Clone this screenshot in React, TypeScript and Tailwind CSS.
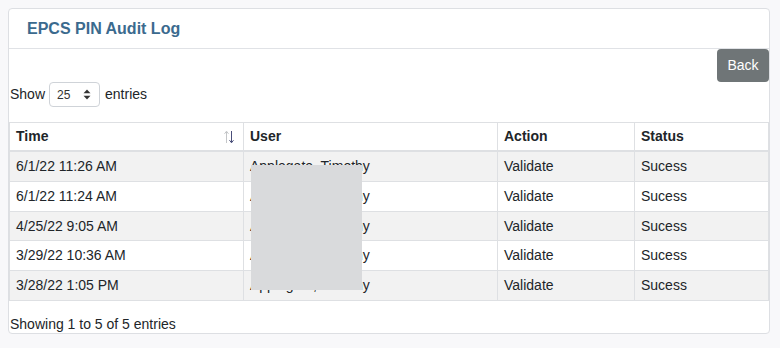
import React from "react";

const rows = [
  ["6/1/22 11:26 AM", "Applegate, Timothy", "Validate", "Sucess"],
  ["6/1/22 11:24 AM", "Applegate, Timothy", "Validate", "Sucess"],
  ["4/25/22 9:05 AM", "Applegate, Timothy", "Validate", "Sucess"],
  ["3/29/22 10:36 AM", "Applegate, Timothy", "Validate", "Sucess"],
  ["3/28/22 1:05 PM", "Applegate, Timothy", "Validate", "Sucess"],
];

const cols = "grid grid-cols-[235px_254px_137px_134px]";

export default function App() {
  return (
    <div
      className="w-[780px] h-[348px] bg-[#f8f8fa] pt-2 px-2 text-[#212529]"
      style={{ fontFamily: '"Liberation Sans", Arial, sans-serif' }}
    >
      <div className="relative w-[762px] h-[326px] bg-white border border-[#dddfe3] rounded-[4px]">
        <div className="h-[40px] border-b border-[#e0e2e6] flex items-center pl-[18px]">
          <h1 className="text-[16px] font-bold text-[#3b6a8e]">EPCS PIN Audit Log</h1>
        </div>
        <div className="flex justify-end">
          <button className="w-[52px] h-[33px] bg-[#6f7577] text-white text-[14px] rounded-[4px]">
            Back
          </button>
        </div>
        <div className="flex items-center h-[25px] text-[14px] pl-px">
          <span>Show</span>
          <div className="ml-[4px] w-[51px] h-[25px] border border-[#cfd3d8] rounded-[4px] flex items-center pl-[7px] pr-[8px] justify-between">
            <span className="text-[12px] text-[#333]">25</span>
            <svg width="8" height="11" viewBox="0 0 8 11">
              <path d="M4 0.5 L7.5 4.2 L0.5 4.2 Z" fill="#333" />
              <path d="M4 10.5 L7.5 6.8 L0.5 6.8 Z" fill="#333" />
            </svg>
          </div>
          <span className="ml-[5px]">entries</span>
        </div>
        <div className="mt-[15px] w-[760px] text-[14px]">
          <div className={`${cols} h-[30px] border-t border-b-2 border-[#dee0e3] font-bold`}>
            <div className="border-l border-r border-[#dee0e3] pl-[6px] flex items-center justify-between pr-[9px]">
              <span>Time</span>
              <svg width="10" height="14" viewBox="0 0 10 14">
                <path d="M2.5 13 V1.5 M0.5 3.8 L2.5 1.2 L4.5 3.8" stroke="#c4c6c8" strokeWidth="1" fill="none" />
                <path d="M7.5 1 V12.5 M5.5 10.2 L7.5 12.8 L9.5 10.2" stroke="#4a4f7a" strokeWidth="1" fill="none" />
              </svg>
            </div>
            <div className="border-r border-[#dee0e3] pl-[6px] flex items-center">User</div>
            <div className="border-r border-[#dee0e3] pl-[6px] flex items-center">Action</div>
            <div className="border-r border-[#dee0e3] pl-[6px] flex items-center">Status</div>
          </div>
          {rows.map((r, i) => (
            <div
              key={i}
              className={`${cols} ${i === 2 ? "h-[29px]" : "h-[30px]"} border-b border-[#dee0e3] ${i % 2 === 0 ? "bg-[#f2f2f2]" : "bg-white"}`}
            >
              {r.map((c, j) => (
                <div
                  key={j}
                  className={`border-r border-[#dee0e3] pl-[6px] flex items-center ${j === 0 ? "border-l" : ""}`}
                >
                  {c}
                </div>
              ))}
            </div>
          ))}
        </div>
        <div className="text-[14px] pl-px mt-[13px]">Showing 1 to 5 of 5 entries</div>
        <div className="absolute left-[242px] top-[156px] w-[111px] h-[125px] bg-[#d9dadc]" />
      </div>
    </div>
  );
}
